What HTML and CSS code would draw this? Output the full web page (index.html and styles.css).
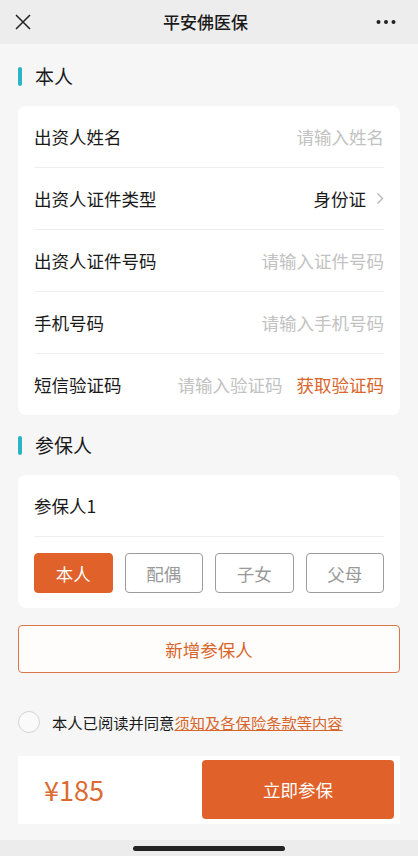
FILE: index.html
```html
<!DOCTYPE html>
<html lang="zh-CN">
<head>
    <meta charset="UTF-8">
    <meta name="viewport" content="width=device-width, initial-scale=1.0">
    <title>平安佛医保</title>
    <link rel="stylesheet" href="styles.css">
</head>
<body>

<div class="page">
    <div class="nav-bar">
        <span class="nav-close">
            <svg width="16" height="16" viewBox="0 0 16 16"><path d="M1 1 L15 15 M15 1 L1 15" stroke="#222" stroke-width="1.5" fill="none"/></svg>
        </span>
        <span class="nav-title">平安佛医保</span>
        <span class="nav-more">
            <svg width="20" height="6" viewBox="0 0 20 6"><circle cx="2.5" cy="3" r="2" fill="#222"/><circle cx="10" cy="3" r="2" fill="#222"/><circle cx="17.5" cy="3" r="2" fill="#222"/></svg>
        </span>
    </div>

    <div class="content">
        <div class="section-title">本人</div>
        <div class="card">
            <div class="form-row">
                <span class="label">出资人姓名</span>
                <span class="placeholder">请输入姓名</span>
            </div>
            <div class="form-row">
                <span class="label">出资人证件类型</span>
                <span class="value">身份证
                    <svg width="8" height="13" viewBox="0 0 8 13"><path d="M1.5 1.5 L6.5 6.5 L1.5 11.5" stroke="#b8b8b8" stroke-width="1.4" fill="none"/></svg>
                </span>
            </div>
            <div class="form-row">
                <span class="label">出资人证件号码</span>
                <span class="placeholder">请输入证件号码</span>
            </div>
            <div class="form-row">
                <span class="label">手机号码</span>
                <span class="placeholder">请输入手机号码</span>
            </div>
            <div class="form-row">
                <span class="label">短信验证码</span>
                <span class="code-box">
                    <span class="placeholder">请输入验证码</span>
                    <span class="get-code">获取验证码</span>
                </span>
            </div>
        </div>

        <div class="section-title">参保人</div>
        <div class="card">
            <div class="form-row">
                <span class="label">参保人1</span>
            </div>
            <div class="relation-list">
                <span class="relation active">本人</span>
                <span class="relation">配偶</span>
                <span class="relation">子女</span>
                <span class="relation">父母</span>
            </div>
        </div>

        <div class="add-btn">新增参保人</div>

        <div class="agree">
            <span class="agree-check"></span>
            <span>本人已阅读并同意<a href="#">须知及各保险条款等内容</a></span>
        </div>

        <div class="pay-bar">
            <span class="price">¥185</span>
            <span class="pay-btn">立即参保</span>
        </div>
    </div>

    <div class="home-bar"><span></span></div>
</div>

</body>
</html>
```

FILE: styles.css
```css
body {
    margin: 0;
    font-family: "Noto Sans CJK SC", "Noto Sans", sans-serif;
    background-color: #f6f6f6;
    color: #1a1a1a;
}
.page {
    width: 418px;
    height: 856px;
    display: flex;
    flex-direction: column;
}
.nav-bar {
    height: 44px;
    background: #ededed;
    display: flex;
    align-items: center;
    justify-content: space-between;
    padding: 0 22px 0 15px;
}
.nav-close, .nav-more {
    width: 24px;
    display: flex;
    align-items: center;
}
.nav-more {
    justify-content: flex-end;
}
.nav-title {
    font-size: 17px;
    font-weight: 500;
    line-height: 24px;
}
.content {
    padding: 2px 18px 0;
}
.section-title {
    display: flex;
    align-items: center;
    height: 24px;
    margin: 18px 0;
    font-size: 19px;
    line-height: 24px;
}
.section-title::before {
    content: "";
    width: 4px;
    height: 19px;
    border-radius: 2px;
    background: #2bb5c4;
    margin-right: 13px;
}
.card {
    background: white;
    border-radius: 8px;
    padding: 0 16px;
}
.form-row {
    height: 61px;
    display: flex;
    align-items: center;
    justify-content: space-between;
    border-bottom: 1px solid #efefef;
    font-size: 17.5px;
}
.card > .form-row:last-child {
    border-bottom: none;
}
.label {
    color: #1a1a1a;
}
.placeholder {
    color: #c2c2c2;
}
.value {
    display: flex;
    align-items: center;
    gap: 10px;
    color: #1a1a1a;
}
.code-box {
    display: flex;
    gap: 14px;
}
.get-code {
    color: #d8652a;
}
.relation-list {
    display: grid;
    grid-template-columns: repeat(4, 1fr);
    gap: 12px;
    padding: 16px 0 15px;
}
.relation {
    height: 38px;
    border: 1px solid #9c9c9c;
    border-radius: 4px;
    display: flex;
    align-items: center;
    justify-content: center;
    font-size: 17.5px;
    color: #999;
}
.relation.active {
    background: #e0612a;
    border-color: #e0612a;
    color: white;
}
.add-btn {
    margin-top: 17px;
    height: 46px;
    border: 1px solid #d9774a;
    border-radius: 4px;
    background: #fffdfc;
    display: flex;
    align-items: center;
    justify-content: center;
    font-size: 17.5px;
    color: #d8652a;
}
.agree {
    margin-top: 38px;
    display: flex;
    align-items: center;
    gap: 12px;
    font-size: 15.3px;
    color: #1a1a1a;
}
.agree-check {
    width: 20px;
    height: 20px;
    border: 1px solid #d4d4d4;
    border-radius: 50%;
    background: #fafafa;
}
.agree a {
    color: #d8652a;
}
.pay-bar {
    margin-top: 23px;
    height: 68px;
    background: white;
    display: flex;
    align-items: center;
    justify-content: space-between;
    padding: 0 6px 1px 26px;
    box-sizing: border-box;
}
.price {
    font-size: 27px;
    color: #dc6a33;
}
.pay-btn {
    width: 192px;
    height: 59px;
    border-radius: 4px;
    background: #e0612a;
    color: white;
    font-size: 17.5px;
    display: flex;
    align-items: center;
    justify-content: center;
}
.home-bar {
    margin-top: auto;
    height: 16px;
    background: #ececec;
    display: flex;
    justify-content: center;
    padding-top: 6px;
    box-sizing: border-box;
}
.home-bar span {
    width: 152px;
    height: 5px;
    border-radius: 3px;
    background: #222;
}
```
